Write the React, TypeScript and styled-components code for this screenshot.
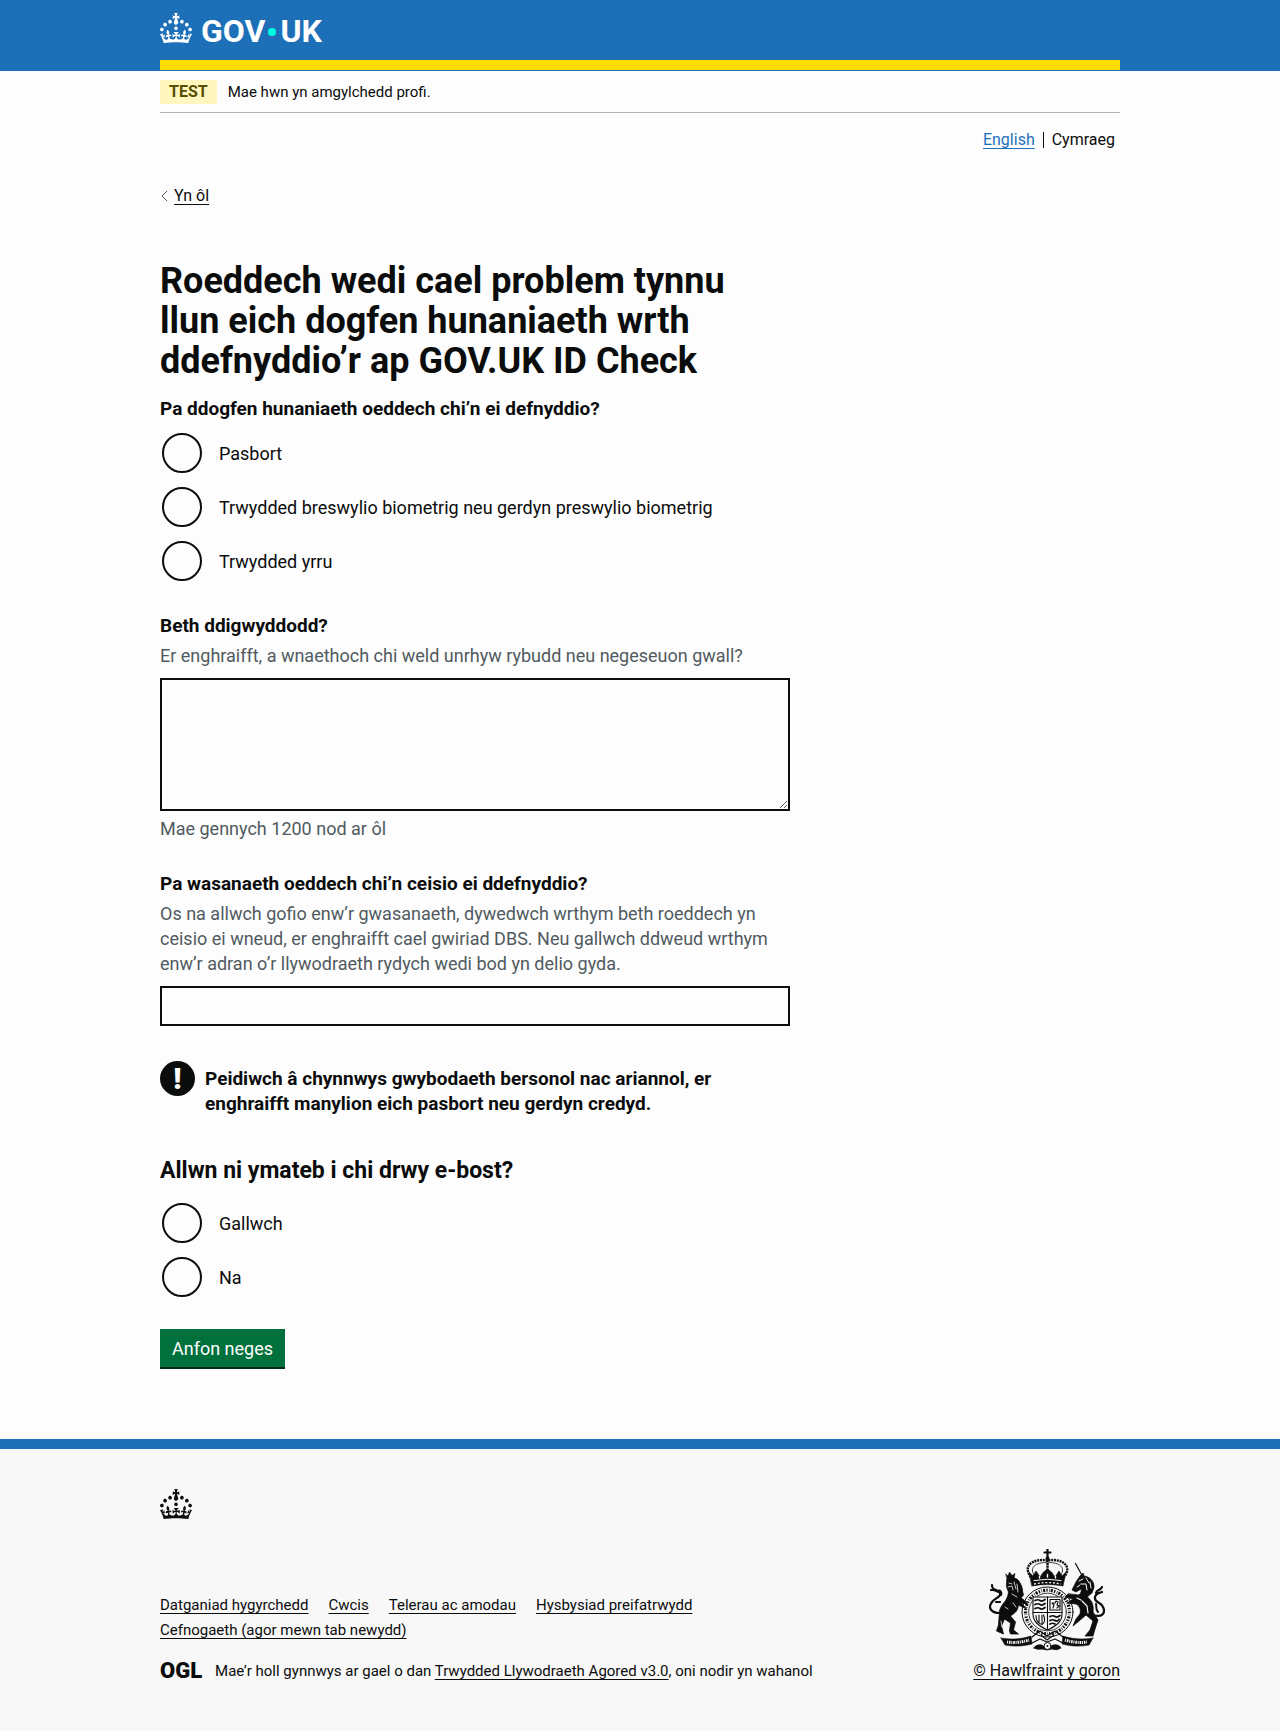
import React, { useState } from "react";
import styled, { createGlobalStyle } from "styled-components";

const color = {
  blue: "#1d70b8",
  yellow: "#ffdd00",
  ink: "#0b0c0c",
  muted: "#505a5f",
  green: "#00703c",
  greenShadow: "#002d18",
  page: "#fdfdfd",
  footer: "#f8f8f8",
};

const MAX_LENGTH = 1200;

const GlobalStyle = createGlobalStyle`
  *, *::before, *::after { box-sizing: border-box; }
  body {
    margin: 0;
    background: ${color.page};
    color: ${color.ink};
    font-family: Roboto, "Liberation Sans", Arial, sans-serif;
    font-size: 18px;
    line-height: 25px;
  }
`;

const Container = styled.div`
  max-width: 960px;
  margin: 0 auto;
  @media (max-width: 1020px) { margin: 0 30px; }
`;

const Header = styled.header`
  background: ${color.blue};
  padding-bottom: 1px;
`;

const HeaderInner = styled(Container)`
  padding: 13px 0 17px;
  border-bottom: 10px solid ${color.yellow};
`;

const HomeLink = styled.a`
  display: inline-flex;
  align-items: flex-end;
  height: 30px;
  color: #ffffff;
  font-size: 32px;
  font-weight: 700;
  line-height: 23px;
  text-decoration: none;
  vertical-align: top;

  svg { margin-right: 9px; }
`;

const LogoDot = styled.span`
  width: 8px;
  height: 8px;
  margin: 0 4px 7px 3px;
  border-radius: 50%;
  background: #00ffe0;
`;

const PhaseBanner = styled.div`
  display: flex;
  align-items: center;
  gap: 11px;
  padding: 9px 0 8px;
  border-bottom: 1px solid #b1b4b6;
  font-size: 15px;
  line-height: 20px;
`;

const Tag = styled.strong`
  padding: 2px 9px;
  background: #fff7bf;
  color: #594d00;
  font-size: 16px;
`;

const LanguageNav = styled.nav`
  padding: 17px 5px 0 0;
  font-size: 16px;
  line-height: 20px;
`;

const LanguageList = styled.ul`
  display: flex;
  justify-content: flex-end;
  align-items: center;
  gap: 8px;
  margin: 0;
  padding: 0;
  list-style: none;
`;

const Divider = styled.li`
  width: 1px;
  height: 16px;
  background: ${color.ink};
`;

const Link = styled.a<{ $blue?: boolean }>`
  color: ${(p) => (p.$blue ? color.blue : color.ink)};
  text-decoration: underline;
  text-decoration-thickness: 1px;
  text-decoration-skip-ink: none;
  text-underline-offset: 3px;
`;

const BackRow = styled.div`
  display: flex;
  align-items: center;
  gap: 6px;
  margin-top: 36px;
  font-size: 16px;
  line-height: 20px;
`;

const Main = styled.main`
  max-width: 630px;
  padding: 55px 0 70px;
`;

const Title = styled.h1`
  margin: 0 0 15px;
  font-size: 36px;
  font-weight: 700;
  line-height: 40px;
`;

const Fieldset = styled.fieldset`
  min-width: 0;
  margin: 0 0 30px;
  padding: 0;
  border: 0;
`;

const Legend = styled.legend<{ $large?: boolean }>`
  display: block;
  padding: 0;
  margin-bottom: ${(p) => (p.$large ? 15 : 10)}px;
  font-size: ${(p) => (p.$large ? 23 : 19)}px;
  line-height: ${(p) => (p.$large ? 30 : 25)}px;
  font-weight: 700;
`;

const RadioList = styled.div`
  display: grid;
  gap: 10px;
`;

const RadioRow = styled.label`
  display: flex;
  align-items: center;
  gap: 17px;
  min-height: 44px;
  padding-left: 2px;
  cursor: pointer;
`;

const RadioInput = styled.input`
  appearance: none;
  flex: none;
  width: 40px;
  height: 40px;
  margin: 0;
  border: 2px solid ${color.ink};
  border-radius: 50%;
  background: transparent;
  cursor: pointer;

  &:checked { background: radial-gradient(${color.ink} 10px, transparent 11px); }
  &:focus { outline: 4px solid ${color.yellow}; }
`;

const Field = styled.div`
  margin-bottom: 30px;
`;

const FieldLabel = styled.label`
  display: block;
  margin-bottom: 5px;
  font-size: 19px;
  font-weight: 700;
`;

const Hint = styled.p`
  margin: 0;
  color: ${color.muted};
`;

const TextBox = styled.input`
  display: block;
  width: 100%;
  height: 40px;
  margin-top: 10px;
  padding: 5px;
  border: 2px solid ${color.ink};
  border-radius: 0;
  background: transparent;
  color: inherit;
  font: inherit;
`;

const TextArea = styled.textarea`
  display: block;
  width: 100%;
  margin: 10px 0 5px;
  padding: 2px 5px;
  border: 2px solid ${color.ink};
  border-radius: 0;
  background: transparent;
  color: inherit;
  font: inherit;
  resize: vertical;
`;

const Warning = styled.div`
  display: flex;
  align-items: flex-start;
  gap: 10px;
  padding: 5px 0 10px;
  margin-bottom: 30px;
`;

const WarningIcon = styled.span`
  flex: none;
  width: 35px;
  height: 35px;
  border-radius: 50%;
  background: ${color.ink};
  color: #ffffff;
  font-size: 30px;
  font-weight: 900;
  line-height: 35px;
  text-align: center;
`;

const WarningText = styled.strong`
  padding-top: 5px;
  font-size: 19px;
`;

const SubmitButton = styled.button`
  display: block;
  height: 38px;
  margin: 0 0 2px;
  padding: 0 12px;
  border: 0;
  background: ${color.green};
  box-shadow: 0 2px 0 ${color.greenShadow};
  color: #ffffff;
  font: inherit;
  cursor: pointer;
`;

const Footer = styled.footer`
  border-top: 10px solid ${color.blue};
  background: ${color.footer};
  padding: 40px 0 50px;
  font-size: 15px;
  line-height: 20px;

  svg { display: block; }
`;

const FooterRow = styled.div`
  display: flex;
  align-items: flex-end;
  gap: 30px;
  margin-top: 30px;
`;

const FooterMeta = styled.div`
  flex: 1;
`;

const FooterLinks = styled.ul`
  display: flex;
  flex-wrap: wrap;
  column-gap: 20px;
  margin: 0 0 18px;
  padding: 0;
  list-style: none;
  line-height: 25px;
`;

const Licence = styled.div`
  display: flex;
  align-items: center;
  gap: 13px;
`;

const OglMark = styled.span`
  font-size: 22px;
  font-weight: 900;
`;

const Copyright = styled.a`
  display: flex;
  flex-direction: column;
  align-items: center;
  gap: 10px;
  color: ${color.ink};
  font-size: 16px;
  text-decoration: underline;
  text-decoration-thickness: 1px;
  text-decoration-skip-ink: none;
  text-underline-offset: 3px;
`;

function Crown() {
  return (
    <svg width="32" height="30" viewBox="0 0 32 30" fill="currentColor" aria-hidden="true">
      <path d="M22.6 10.4c-1 .4-2-.1-2.4-1-.4-.9.1-2 1-2.4.9-.4 2 .1 2.4 1s-.1 2-1 2.4m-5.9 6.7c-.9.4-2-.1-2.4-1-.4-.9.1-2 1-2.4.9-.4 2 .1 2.4 1s-.1 2-1 2.4m10.8-3.7c-1 .4-2-.1-2.4-1-.4-.9.1-2 1-2.4.9-.4 2 .1 2.4 1s0 2-1 2.4m3.3 4.8c-1 .4-2-.1-2.4-1-.4-.9.1-2 1-2.4.9-.4 2 .1 2.4 1s-.1 2-1 2.4M17 4.7l2.3 1.2V2.5l-2.3.7-.2-.2.9-3h-3.4l.9 3-.2.2c-.1.1-2.3-.7-2.3-.7v3.4L15 4.7c.1.1.1.2.2.2l-1.3 4c-.1.2-.1.4-.1.6 0 1.1.8 2 1.9 2.2h.7c1-.2 1.9-1.1 1.9-2.1 0-.2 0-.4-.1-.6l-1.3-4c-.1-.2 0-.2.1-.3m-7.6 5.7c.9.4 2-.1 2.4-1 .4-.9-.1-2-1-2.4-.9-.4-2 .1-2.4 1s0 2 1 2.4m-5 3c.9.4 2-.1 2.4-1 .4-.9-.1-2-1-2.4-.9-.4-2 .1-2.4 1s.1 2 1 2.4m-3.2 4.8c.9.4 2-.1 2.4-1 .4-.9-.1-2-1-2.4-.9-.4-2 .1-2.4 1s0 2 1 2.4m14.8 11c4.4 0 8.6.3 12.3.8 1.1-4.5 2.4-7 3.7-8.8l-2.5-.9c.2 1.3.3 1.9 0 2.7-.4-.4-.8-1.1-1.1-2.3l-1.2 4c.7-.5 1.3-.8 2-.9-1.1 2.5-2.6 3.1-3.5 3-1.1-.2-1.7-1.2-1.5-2.1.3-1.2 1.5-1.5 2.1-.1 1.1-2.3-.8-3-2-2.3 1.9-1.9 2.1-3.5.6-5.6-2.1 1.6-2.1 3.2-1.2 5.5-1.2-1.4-3.2-.6-2.5 1.6.9-1.4 2.1-.5 1.9.8-.2 1.1-1.7 2.1-3.5 1.9-2.7-.2-2.9-2.1-2.9-3.6.7-.1 1.9.5 2.9 1.9l.4-4.3c-1.1 1.1-2.1 1.4-3.2 1.4.4-1.2 2.1-3 2.1-3h-5.4s1.7 1.9 2.1 3c-1.1 0-2.1-.2-3.2-1.4l.4 4.3c1-1.4 2.2-2 2.9-1.9-.1 1.5-.2 3.4-2.9 3.6-1.9.2-3.4-.8-3.5-1.9-.2-1.3 1-2.2 1.9-.8.7-2.3-1.2-3-2.5-1.6.9-2.2.9-3.9-1.2-5.5-1.5 2-1.3 3.7.6 5.6-1.2-.7-3.1 0-2 2.3.6-1.4 1.8-1.1 2.1.1.2.9-.3 1.9-1.5 2.1-.9.2-2.4-.5-3.5-3 .6 0 1.2.3 2 .9l-1.2-4c-.3 1.1-.7 1.9-1.1 2.3-.3-.8-.2-1.4 0-2.7l-2.9.9C1.3 23 2.6 25.5 3.7 30c3.7-.5 7.9-.8 12.3-.8" />
    </svg>
  );
}

function Crest() {
  const ink = color.ink;
  const paper = color.footer;
  return (
    <svg width="116" height="102" viewBox="0 0 116 102" fill="none" stroke={ink} strokeLinecap="round" strokeLinejoin="round" aria-hidden="true">
      {/* crown */}
      <path d="M58.5 0v8M55.500 3.500h6" strokeWidth="2.2" />
      <circle cx="58.5" cy="9.5" r="2" fill={ink} stroke="none" />
      <path d="M42 28C33 17 44 9 58.5 11.5 73 9 84 17 75 28" strokeWidth="2.4" strokeDasharray="2 .8" strokeLinecap="butt" />
      <path d="M45 26C40 18 47 13.500 57 13.5M72 26C77 18 70 13.500 60 13.5" strokeWidth=".8" />
      <path d="M58.5 11v13" strokeWidth="2.4" strokeDasharray="2.2 .6" strokeLinecap="butt" />
      <path d="M40 23l4 4 3-5 4 6 3.500-5 4-3 4 3 3.500 5 4-6 3 5 4-4-3 14q-15.500-3-31 0z" fill={ink} strokeWidth=".6" />
      <path d="M45 31.5q13.500-2.500 27 0" stroke={paper} strokeWidth="1" />
      <path d="M45 35q13.500-2.800 27 0" stroke={paper} strokeWidth="1.3" strokeDasharray="2 1.8" strokeLinecap="butt" />
      <path d="M50.500 27.500v1.500M66.500 27.500v1.500M58.500 25.500v2.5" stroke={paper} strokeWidth="1.4" />
      {/* garter */}
      <ellipse cx="58.5" cy="63" rx="25.5" ry="25" fill={paper} strokeWidth="1" />
      <ellipse cx="58.5" cy="63" rx="22" ry="21.8" strokeWidth="3.2" strokeDasharray="1.3 1.5 .6 1.1 2 1.3" strokeLinecap="butt" />
      <ellipse cx="58.5" cy="63" rx="18.8" ry="18.8" strokeWidth=".8" />
      {/* quartered shield */}
      <path d="M44 48h29v17c0 8-6 12-14.500 16C50 77 44 73 44 65z" fill={paper} strokeWidth="1.1" />
      <path d="M58.500 48v32M44 63.500h29" strokeWidth="1.1" />
      <path d="M46 51.500q3-1.500 5 0t5-1M46 55.500q3-1.500 5 0t5-1M46 59.500q3-1.500 5 0t5-1M61 67.500q3-1.500 5 0t5-1M61 71.500q3-1.500 5 0t4-1M61 75q3-1.500 5 0" strokeWidth="1.7" />
      <path d="M61 50.500h10v10.500H61zM64 59l1-3-2-2 3 0 1-2 2 1-1 3 2 1-2 2" strokeWidth="1.1" />
      <path d="M47 66.500c0 5 2 8 6 9 3-2 3-6 1.500-9.500M50 66v8M53 66v8" strokeWidth="1.1" />
      {/* lion */}
      <path d="M17 25l2 2 1.500-4 2.500 3.500 3-2-1 5h-7z" fill={ink} strokeWidth=".6" />
      <path d="M18 30c5-3 11-1 13 4 3 4 2 8 3.500 12L32 49c3 2 5 3 6.500 6l-6-1 5 6-8-4c-1 7-4 8-8 11l5 6-2 8 5 4h-8l-1-3 1-8-6-4-3 7 2 8-7-3 2-6 1-14c2-8 8-9 9-19l-2-5z" fill={ink} strokeWidth=".8" />
      <path d="M20 34l3 1M19 38l4-1 1 4M25 33l2 7M28 35l1 8M23 45l5 3M16 58l3 2M24 54l3 4M12 72l1 6" stroke={paper} strokeWidth=".8" />
      <path d="M11 64C1 64-1 58 3 53s9-4 8-10" strokeWidth="2.2" />
      <path d="M3 36c0 5 3 4 6 6 2-1 4 1 3 4M2 41c3-1 5 1 8 2M11 53l-4 0" strokeWidth="2.2" />
      {/* unicorn */}
      <path d="M86.500 14.500l6 11" strokeWidth="1.2" />
      <path d="M91 27l3-3 1 3c6 1 10 5 10 11l-2 6-5 4-9-1c2-2 4-4 3-7l-5 3-4-2 4-8z" fill={ink} strokeWidth=".8" />
      <path d="M90 32l4-2M92 35l5 0 1 6M97 29l3 5M101 33l1 6M88 38l3-2" stroke={paper} strokeWidth="1" />
      <path d="M79 45l-3 3 8 2-6 4 9 1c4 2 5 6 4 10l-4 5-3 7 6-5 7-6 7 6-3 9-5 6h8l2-7 3-9-5-8c1-7-1-12-7-16z" fill={ink} strokeWidth=".8" />
      <path d="M93 52l5 5 1 7M97 68l3 6-3 8M88 49l4 2" stroke={paper} strokeWidth="1.2" />
      <path d="M104 66c9 3 13-2 10-8s-9-4-8-10c1-4 4-4 7-5M107 44c1-4 4-2 6-6" strokeWidth="2.2" />
      <path d="M109 63c-3-3-1-6-2-8" strokeWidth="2" />
      {/* motto ribbon */}
      <path d="M12 89l4 7c10 2 19 1 27-1l-1-8c-9 3-20 4-30 2zM104 89l-4 7c-10 2-19 1-27-1l1-8c9 3 20 4 30 2z" fill={ink} strokeWidth=".6" />
      <path d="M18 93q11 1.500 22-2M76 91q11 3.500 22 2" stroke={paper} strokeWidth="3" strokeDasharray="1 .9 1.6 .8" strokeLinecap="butt" />
      <path d="M43 88l8-6 7 5 8-5 8 6M43 94l8-4 7 3 8-3 8 4M52 86l6 5 7-5" strokeWidth="1.2" />
      <path d="M45 99q2-4 8-3l5 4 6-4q6-1 8 3-4 3-9 1l-5 1-5-1q-5 1-8-1z" fill={ink} strokeWidth=".8" />
      <circle cx="58.5" cy="97" r="3.5" fill={paper} strokeWidth="1" />
      <circle cx="58.5" cy="97" r="1" fill={ink} stroke="none" />
    </svg>
  );
}

function Radios({ name, options }: { name: string; options: string[] }) {
  return (
    <RadioList>
      {options.map((option) => (
        <RadioRow key={option}>
          <RadioInput type="radio" name={name} value={option} />
          {option}
        </RadioRow>
      ))}
    </RadioList>
  );
}

const footerLinks = [
  "Datganiad hygyrchedd",
  "Cwcis",
  "Telerau ac amodau",
  "Hysbysiad preifatrwydd",
  "Cefnogaeth (agor mewn tab newydd)",
];

export default function App() {
  const [problem, setProblem] = useState("");

  return (
    <>
      <GlobalStyle />
      <Header>
        <HeaderInner>
          <HomeLink href="#" aria-label="GOV.UK">
            <Crown />
            <span>GOV</span>
            <LogoDot />
            <span>UK</span>
          </HomeLink>
        </HeaderInner>
      </Header>

      <Container>
        <PhaseBanner>
          <Tag>TEST</Tag>
          <span>Mae hwn yn amgylchedd profi.</span>
        </PhaseBanner>

        <LanguageNav>
          <LanguageList>
            <li><Link $blue href="#">English</Link></li>
            <Divider aria-hidden="true" />
            <li>Cymraeg</li>
          </LanguageList>
        </LanguageNav>

        <BackRow>
          <svg width="8" height="12" viewBox="0 0 8 12" fill="none" stroke={color.muted} aria-hidden="true">
            <path d="M7 1L2 6l5 5" />
          </svg>
          <Link href="#">Yn ôl</Link>
        </BackRow>

        <Main>
          <Title>Roeddech wedi cael problem tynnu llun eich dogfen hunaniaeth wrth ddefnyddio’r ap GOV.UK ID Check</Title>
          <form onSubmit={(e) => e.preventDefault()}>
            <Fieldset>
              <Legend>Pa ddogfen hunaniaeth oeddech chi’n ei defnyddio?</Legend>
              <Radios
                name="document"
                options={["Pasbort", "Trwydded breswylio biometrig neu gerdyn preswylio biometrig", "Trwydded yrru"]}
              />
            </Fieldset>

            <Field>
              <FieldLabel htmlFor="problem">Beth ddigwyddodd?</FieldLabel>
              <Hint id="problem-hint">Er enghraifft, a wnaethoch chi weld unrhyw rybudd neu negeseuon gwall?</Hint>
              <TextArea
                id="problem"
                rows={5}
                aria-describedby="problem-hint problem-count"
                value={problem}
                onChange={(e) => setProblem(e.target.value)}
              />
              <Hint id="problem-count">Mae gennych {MAX_LENGTH - problem.length} nod ar ôl</Hint>
            </Field>

            <Field>
              <FieldLabel htmlFor="service">Pa wasanaeth oeddech chi’n ceisio ei ddefnyddio?</FieldLabel>
              <Hint id="service-hint">
                Os na allwch gofio enw’r gwasanaeth, dywedwch wrthym beth roeddech yn ceisio ei wneud, er enghraifft
                cael gwiriad DBS. Neu gallwch ddweud wrthym enw’r adran o’r llywodraeth rydych wedi bod yn delio gyda.
              </Hint>
              <TextBox id="service" type="text" aria-describedby="service-hint" />
            </Field>

            <Warning>
              <WarningIcon aria-hidden="true">!</WarningIcon>
              <WarningText>
                Peidiwch â chynnwys gwybodaeth bersonol nac ariannol, er enghraifft manylion eich pasbort neu gerdyn
                credyd.
              </WarningText>
            </Warning>

            <Fieldset>
              <Legend $large>Allwn ni ymateb i chi drwy e-bost?</Legend>
              <Radios name="contact" options={["Gallwch", "Na"]} />
            </Fieldset>

            <SubmitButton type="submit">Anfon neges</SubmitButton>
          </form>
        </Main>
      </Container>

      <Footer>
        <Container>
          <Crown />
          <FooterRow>
            <FooterMeta>
              <FooterLinks>
                {footerLinks.map((label) => (
                  <li key={label}><Link href="#">{label}</Link></li>
                ))}
              </FooterLinks>
              <Licence>
                <OglMark>OGL</OglMark>
                <span>
                  Mae’r holl gynnwys ar gael o dan <Link href="#">Trwydded Llywodraeth Agored v3.0</Link>, oni nodir yn
                  wahanol
                </span>
              </Licence>
            </FooterMeta>
            <Copyright href="#">
              <Crest />
              <span>© Hawlfraint y goron</span>
            </Copyright>
          </FooterRow>
        </Container>
      </Footer>
    </>
  );
}
